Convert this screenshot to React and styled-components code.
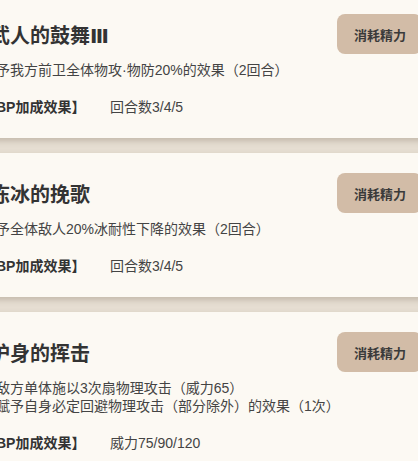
import styled, { createGlobalStyle } from "styled-components";

const GlobalStyle = createGlobalStyle`
  html, body {
    margin: 0;
    padding: 0;
    background: #e6ded2;
    overflow: hidden;
  }
  body {
    font-family: "Liberation Sans", "Noto Sans CJK SC", sans-serif;
  }
`;

const skills = [
  {
    name: "武人的鼓舞Ⅲ",
    desc: ["给予我方前卫全体物攻·物防20%的效果（2回合）"],
    bp: "回合数3/4/5",
  },
  {
    name: "冻冰的挽歌",
    desc: ["给予全体敌人20%冰耐性下降的效果（2回合）"],
    bp: "回合数3/4/5",
  },
  {
    name: "护身的挥击",
    desc: [
      "对敌方单体施以3次扇物理攻击（威力65）",
      "并赋予自身必定回避物理攻击（部分除外）的效果（1次）",
    ],
    bp: "威力75/90/120",
  },
];

export default function App() {
  return (
    <>
      <GlobalStyle />
      <List>
        {skills.map((skill) => (
          <SkillCard key={skill.name}>
            <Header>
              <Title>{skill.name}</Title>
              <CostButton>消耗精力</CostButton>
            </Header>
            <Description>
              {skill.desc.map((line) => (
                <div key={line}>{line}</div>
              ))}
            </Description>
            <BpRow>
              <BpLabel>【BP加成效果】</BpLabel>
              <BpValue>{skill.bp}</BpValue>
            </BpRow>
          </SkillCard>
        ))}
      </List>
    </>
  );
}

const List = styled.div`
  display: flex;
  flex-direction: column;
  gap: 15px;
  margin-top: -6px;
  margin-left: -30px;
  width: 470px;
`;

const SkillCard = styled.div`
  display: flex;
  flex-direction: column;
  padding: 20px 20px 22px 14px;
  background: #fcf9f3;
  box-shadow: 0 3px 6px rgba(90, 75, 55, 0.25);
`;

const Header = styled.div`
  display: flex;
  align-items: center;
  justify-content: space-between;
  height: 40px;
`;

const Title = styled.h2`
  margin: 0 0 0 6px;
  font-family: "DejaVu Sans", "Noto Sans CJK SC", sans-serif;
  font-size: 20px;
  font-weight: 700;
  color: #333;
`;

const CostButton = styled.div`
  display: flex;
  align-items: center;
  width: 85px;
  height: 40px;
  padding-left: 17px;
  box-sizing: border-box;
  border-radius: 8px;
  background: #d2bca7;
  color: #3a3a3a;
  font-size: 13px;
  font-weight: 700;
  margin-right: -2px;
`;

const Description = styled.div`
  margin-top: 7px;
  margin-left: -2px;
  font-size: 14px;
  line-height: 18px;
  color: #444;
`;

const BpRow = styled.div`
  display: flex;
  margin-top: 19px;
  margin-left: -2px;
  font-size: 14px;
  line-height: 18px;
  color: #444;
`;

const BpLabel = styled.span`
  width: 128px;
  font-weight: 700;
  color: #333;
`;

const BpValue = styled.span``;
